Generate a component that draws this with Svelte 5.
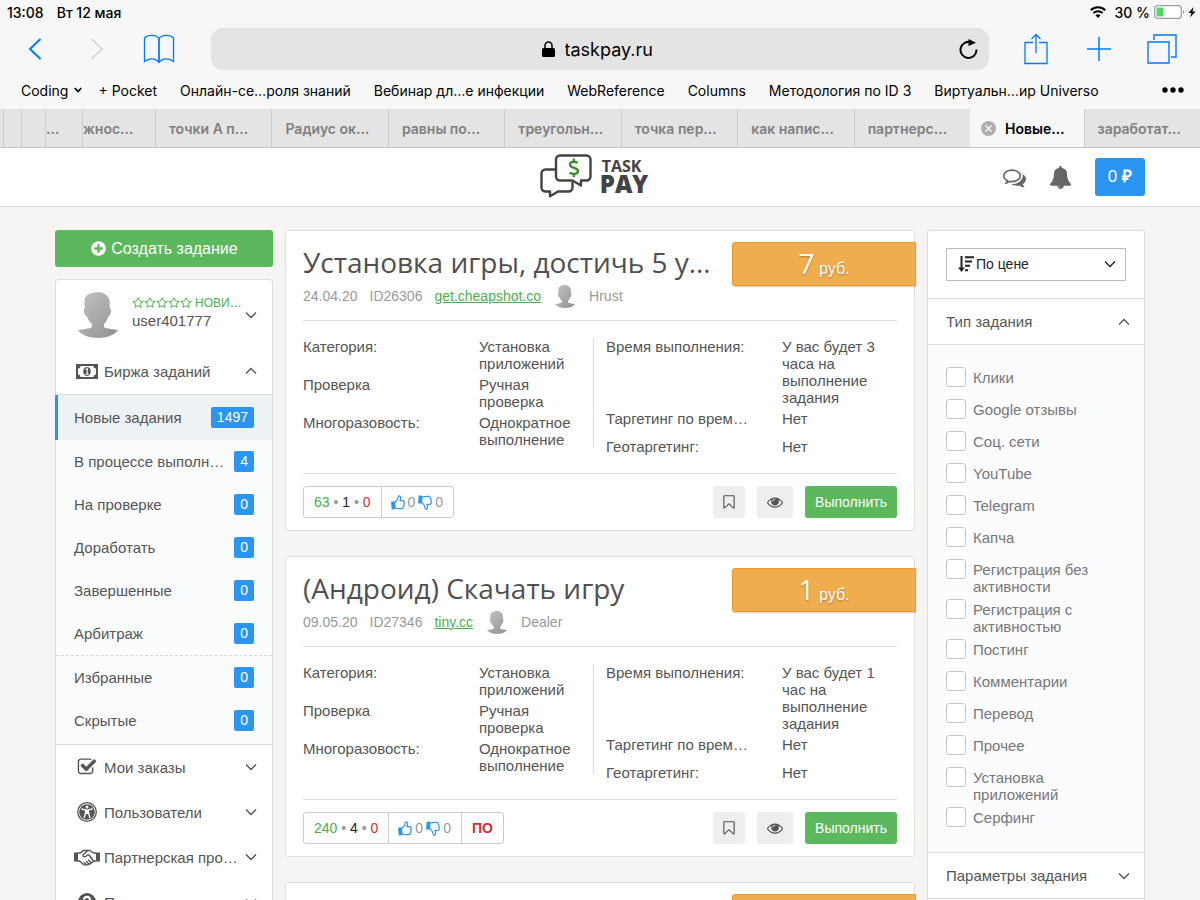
<script>
  const bookmarks = [
    '+ Pocket',
    'Онлайн-се…роля знаний',
    'Вебинар дл…е инфекции',
    'WebReference',
    'Columns',
    'Методология по ID 3',
    'Виртуальн…ир Universo'
  ];

  // tabs squeezed under the left edge, from the outermost inwards
  const stackedTabs = [
    { title: '', width: 3 },
    { title: '', width: 18 },
    { title: '', width: 24 },
    { title: '…', width: 37 },
    { title: 'жнос…', width: 73 }
  ];

  const tabs = [
    'точки А п…',
    'Радиус ок…',
    'равны по…',
    'треугольн…',
    'точка пер…',
    'как напис…',
    'партнерс…',
    'Новые…',
    'заработат…'
  ];
  const activeTab = 'Новые…';

  const exchange = [
    { title: 'Новые задания', count: 1497 },
    { title: 'В процессе выполн…', count: 4 },
    { title: 'На проверке', count: 0 },
    { title: 'Доработать', count: 0 },
    { title: 'Завершенные', count: 0 },
    { title: 'Арбитраж', count: 0 }
  ];

  const saved = [
    { title: 'Избранные', count: 0 },
    { title: 'Скрытые', count: 0 }
  ];

  const sections = [
    { title: 'Мои заказы', icon: 'check' },
    { title: 'Пользователи', icon: 'access' },
    { title: 'Партнерская про…', icon: 'handshake' },
    { title: 'Помощь', icon: 'help' }
  ];

  const tasks = [
    {
      title: 'Установка игры, достичь 5 у…',
      price: 7,
      date: '24.04.20',
      id: 'ID26306',
      site: 'get.cheapshot.co',
      author: 'Hrust',
      time: 'У вас будет 3 часа на выполнение задания',
      done: 63,
      wait: 1,
      fail: 0,
      soft: false
    },
    {
      title: '(Андроид) Скачать игру',
      price: 1,
      date: '09.05.20',
      id: 'ID27346',
      site: 'tiny.cc',
      author: 'Dealer',
      time: 'У вас будет 1 час на выполнение задания',
      done: 240,
      wait: 4,
      fail: 0,
      soft: true
    }
  ];

  const types = [
    'Клики',
    'Google отзывы',
    'Соц. сети',
    'YouTube',
    'Telegram',
    'Капча',
    'Регистрация без активности',
    'Регистрация с активностью',
    'Постинг',
    'Комментарии',
    'Перевод',
    'Прочее',
    'Установка приложений',
    'Серфинг'
  ];

  const paths = {
    check:
      'M1472 930v318q0 119-84.5 203.5t-203.5 84.5h-832q-119 0-203.5-84.5t-84.5-203.5v-832q0-119 84.5-203.5t203.5-84.5h832q63 0 117 25 15 7 18 23 3 17-9 29l-49 49q-10 10-23 10-3 0-9-2-23-6-45-6h-832q-66 0-113 47t-47 113v832q0 66 47 113t113 47h832q66 0 113-47t47-113v-254q0-13 9-22l64-64q10-10 23-10 6 0 12 3 20 8 20 29zm231-489l-814 814q-24 24-57 24t-57-24l-430-430q-24-24-24-57t24-57l110-110q24-24 57-24t57 24l263 263 647-647q24-24 57-24t57 24l110 110q24 24 24 57t-24 57z',
    bell:
      'M912 1696q0-16-16-16-59 0-101.5-42.5t-42.5-101.5q0-16-16-16t-16 16q0 73 51.5 124.5t124.5 51.5q16 0 16-16zm816-288q0 52-38 90t-90 38h-448q0 106-75 181t-181 75-181-75-75-181h-448q-52 0-90-38t-38-90q50-42 91-88t85-119.5 74.5-158.5 50-206 19.5-260q0-152 117-282.5t307-158.5q-8-19-8-39 0-40 28-68t68-28 68 28 28 68q0 20-8 39 190 28 307 158.5t117 282.5q0 139 19.5 260t50 206 74.5 158.5 85 119.5 91 88z',
    comments:
      'M704 384q-153 0-286 52t-211.5 141-78.5 191q0 82 53 158t149 132l97 56-35 84q34-20 62-39l44-31 53 10q78 14 153 14 153 0 286-52t211.5-141 78.5-191-78.5-191-211.5-141-286-52zm0-128q191 0 353.5 68.5t256.5 186.5 94 257-94 257-256.5 186.5-353.5 68.5q-86 0-176-16-124 88-278 128-36 9-86 16h-3q-11 0-20.5-8t-11.5-21q-1-3-1-6.5t.5-6.5 2-6l2.5-5 3.5-5.5 4-5 4.5-5 4-4.5q5-6 23-25t26-29.5 22.5-29 25-38.5 20.5-44q-124-72-195-177t-71-224q0-139 94-257t256.5-186.5 353.5-68.5zm822 1169q10 24 20.5 44t25 38.5 22.5 29 26 29.5 23 25q1 1 4 4.5t4.5 5 4 5 3.5 5.5l2.5 5 2 6 .5 6.5-1 6.5q-3 14-13 22t-22 7q-50-7-86-16-154-40-278-128-90 16-176 16-271 0-472-132 58 4 88 4 161 0 309-45t264-129q125-92 192-212t67-254q0-77-23-152 129 71 204 178t75 230q0 120-71 224.5t-195 176.5z',
    plus:
      'M1344 960v-128q0-26-19-45t-45-19h-256v-256q0-26-19-45t-45-19h-128q-26 0-45 19t-19 45v256h-256q-26 0-45 19t-19 45v128q0 26 19 45t45 19h256v256q0 26 19 45t45 19h128q26 0 45-19t19-45v-256h256q26 0 45-19t19-45zm320-64q0 209-103 385.5t-279.5 279.5-385.5 103-385.5-103-279.5-279.5-103-385.5 103-385.5 279.5-279.5 385.5-103 385.5 103 279.5 279.5 103 385.5z',
    star:
      'M1201 1004l306-297-422-62-189-382-189 382-422 62 306 297-73 421 378-199 377 199zm527-357q0 22-26 48l-363 354 86 500q1 7 1 20 0 50-41 50-19 0-40-12l-449-236-449 236q-22 12-40 12-21 0-31.5-14.5t-10.5-35.5q0-6 2-20l86-500-364-354q-25-27-25-48 0-37 56-46l502-73 225-455q19-41 49-41t49 41l225 455 502 73q56 9 56 46z',
    bookmark:
      'M1408 256h-1024v1242l423-406 89-85 89 85 423 406v-1242zm12-128q23 0 44 9 33 13 52.5 41t19.5 62v1289q0 34-19.5 62t-52.5 41q-19 8-44 8-48 0-83-32l-441-424-441 424q-36 33-83 33-23 0-44-9-33-13-52.5-41t-19.5-62v-1289q0-34 19.5-62t52.5-41q21-9 44-9h1048z',
    eye:
      'M1664 960q-152-236-381-353 61 104 61 225 0 185-131.5 316.5t-316.5 131.5-316.5-131.5-131.5-316.5q0-121 61-225-229 117-381 353 133 205 333.5 326.5t434.5 121.5 434.5-121.5 333.5-326.5zm-720-384q0-20-14-34t-34-14q-125 0-214.5 89.5t-89.5 214.5q0 20 14 34t34 14 34-14 14-34q0-86 61-147t147-61q20 0 34-14t14-34zm848 384q0 34-20 69-140 230-376.5 368.5t-499.5 138.5-499.5-139-376.5-368q-20-35-20-69t20-69q140-229 376.5-368t499.5-139 499.5 139 376.5 368q20 35 20 69z'
  };
</script>

{#snippet glyph(name, size)}
  <svg width={size} height={size} viewBox="0 0 1792 1792" fill="currentColor" aria-hidden="true">
    <path d={paths[name]} />
  </svg>
{/snippet}

{#snippet chevron(up)}
  <svg class="chevron" width="12" height="8" viewBox="0 0 12 8" fill="none" stroke="currentColor" stroke-width="1.4" aria-hidden="true">
    <path d={up ? 'M1 6.5 6 1.5l5 5' : 'M1 1.5l5 5 5-5'} />
  </svg>
{/snippet}

{#snippet avatar(width, height)}
  <svg class="avatar" {width} {height} viewBox="0 0 40 46" aria-hidden="true">
    <defs>
      <linearGradient id="shade" x1="0" y1="0" x2="1" y2="1">
        <stop offset="0" stop-color="#c4c4c4" />
        <stop offset="1" stop-color="#8f9092" />
      </linearGradient>
    </defs>
    <path
      fill="url(#shade)"
      d="M7 7C7 4 10 2 14 1c4-1.400 10-1 12 .5 1 1 2.500 1.500 3.500 3C32 7 32 11 31.500 16c1.800.5 1.700 3 1 5-.6 2-1 3.500-2.300 3.500-.7 3.500-2.200 5.500-4.200 7.500v3c2 2 11 2 14 3.500C36 43 29 46 20 46S4 43 0 38.500C3 37 12 37 14 35v-3c-2.500-2-4-4.500-5-7.500-1.500 0-2.300-2-2.800-4C5.600 18 5.500 16.500 7 16 6.300 13 6 10 7 7z"
    />
  </svg>
{/snippet}

{#snippet thumb(down)}
  <svg class="thumb" width="14" height="15" viewBox="0 0 15 16" fill="none" stroke="currentColor" stroke-width="1.300" stroke-linejoin="round" aria-hidden="true">
    <g transform={down ? 'matrix(1 0 0 -1 0 16)' : undefined}>
      <path d="M.8 7.500h3l.5 7-3 .3z" fill="currentColor" />
      <path d="M4 7.700c1.600-.8 2.800-2.300 3.300-4.200.2-1.300.3-2.500 1.200-2.700 1.500 0 1.900 1.500 1.700 2.800-.1 1-.5 1.800-.6 2.500h3.100c1.400 0 1.800 1.400 1.100 2.100.6.700.6 1.700-.1 2.300.4.800.1 1.600-.5 2 .1 1.400-.7 2-2 2.100-2.800.2-4.200-.1-6.700-.7" />
    </g>
  </svg>
{/snippet}

{#snippet menuIcon(name)}
  <span class="menu-icon">
    {#if name === 'check'}
      {@render glyph('check', 20)}
    {:else if name === 'money'}
      <svg width="22" height="15" viewBox="0 0 22 15" aria-hidden="true">
        <path fill="currentColor" fill-rule="evenodd" d="M0 0h22v15H0zM4.500 2A2.500 2.500 0 0 1 2 4.500v6A2.500 2.500 0 0 1 4.500 13h13a2.500 2.500 0 0 1 2.500-2.500v-6A2.500 2.500 0 0 1 17.500 2z" />
        <ellipse cx="11" cy="7.500" rx="3.800" ry="4.500" fill="currentColor" />
        <path d="M9.800 5.500 11.200 4.500V10M9.500 10.200h3.300" fill="none" stroke="#fff" stroke-width="1.100" />
      </svg>
    {:else if name === 'access'}
      <svg width="20" height="20" viewBox="0 0 20 20" aria-hidden="true">
        <circle cx="10" cy="10" r="9.300" fill="none" stroke="currentColor" stroke-width="1.300" />
        <circle cx="10" cy="10" r="7.800" fill="currentColor" />
        <circle cx="10" cy="5" r="1.500" fill="#fff" />
        <path d="M4.800 7l3.700.9v3L7.200 15.500M15.200 7l-3.700.9v3l1.300 4.600" fill="none" stroke="#fff" stroke-width="1.300" stroke-linecap="round" />
        <path d="M8.200 7.500h3.600v4.500H8.200z" fill="#fff" />
      </svg>
    {:else if name === 'handshake'}
      <svg width="26" height="17" viewBox="0 0 26 17" fill="none" stroke="currentColor" stroke-width="1.400" stroke-linejoin="round" stroke-linecap="round" aria-hidden="true">
        <path d="M0 3.500h4v9H0zM22 3.500h4v9h-4z" fill="currentColor" stroke="none" />
        <path d="M4 4h2.500L9 1.500h4L16 1.500l3.500 2.500H22M4 12h1.500l4 3.500c1 .8 2 .8 2.800 0 1 .7 2.200.3 2.700-.6 1.200.3 2-.2 2.300-1.200 1.200 0 1.700-.6 1.800-1.700H22" />
        <path d="M13.500 1.800 9 6c-.5 1.500 1.500 2.500 3 1.200L13.500 6h1.500l4 5.500M12 15.300l-1.700-1.500M14.800 14.700l-2.300-2.200M17 13.500l-2.500-2.500" />
      </svg>
    {:else}
      <svg width="20" height="20" viewBox="0 0 20 20" aria-hidden="true">
        <circle cx="10" cy="10" r="9" fill="currentColor" />
        <path d="M7 7.500C7.200 4 13 4 13 7.500c0 2-3 2-3 4.500M10 14v2" fill="none" stroke="#fff" stroke-width="2.200" />
      </svg>
    {/if}
  </span>
{/snippet}

{#snippet counter(item, active)}
  <li>
    <a href="#tasks" class="sub" class:active>
      <span>{item.title}</span>
      <span class="badge">{item.count}</span>
    </a>
  </li>
{/snippet}

<div class="screen">
  <div class="chrome">
    <div class="status">
      <span>13:08</span>
      <span class="date">Вт 12 мая</span>
      <svg width="16" height="12" viewBox="0 0 16 12" fill="none" stroke="#000" stroke-width="2" aria-label="Wi-Fi">
        <path d="M.8 4.300a10.300 10.300 0 0 1 14.400 0M3.400 7a6.600 6.600 0 0 1 9.200 0" />
        <path d="M8 12 5.500 9.300a3.700 3.700 0 0 1 5 0z" fill="#000" stroke="none" />
      </svg>
      <span class="percent">30 %</span>
      <svg width="42" height="14" viewBox="0 0 42 14" aria-hidden="true">
        <rect x=".7" y=".7" width="26.600" height="12.600" rx="3" fill="#fff" stroke="#a0a0a0" stroke-width="1.300" />
        <rect x="2.500" y="2.500" width="7" height="9" rx="1" fill="#4cd964" />
        <path d="M29 5c1.500.8 1.500 3.200 0 4z" fill="#a0a0a0" />
        <path d="M39.500 2l-5 6h3l-1.500 4.500 5.500-6h-3z" fill="#000" />
      </svg>
    </div>

    <div class="toolbar">
      <div class="tools left">
        <button aria-label="Назад">
          <svg width="14" height="22" viewBox="0 0 14 22" fill="none" stroke="#007aff" stroke-width="2"><path d="M12.500 1 2 11l10.500 10" /></svg>
        </button>
        <button aria-label="Вперёд" disabled>
          <svg width="14" height="22" viewBox="0 0 14 22" fill="none" stroke="#d6d6d6" stroke-width="1.600"><path d="M1.500 1 12 11 1.500 21" /></svg>
        </button>
        <button aria-label="Закладки">
          <svg width="32" height="30" viewBox="0 0 32 30" fill="none" stroke="#007aff" stroke-width="1.300">
            <path d="M16 4.500C13 .5 5 .5 1.500 4v23.500c4-3.500 11-4 14.500 1 3.500-5 10.500-4.500 14.500-1V4C27 .5 19 .5 16 4.500zv24" />
            <path d="M16 4.500v24" />
          </svg>
        </button>
      </div>

      <div class="address">
        <svg width="13" height="16" viewBox="0 0 13 16" aria-hidden="true">
          <rect x="0" y="7" width="13" height="9" rx="1.500" />
          <path d="M3 7.500V4.500a3.500 3.500 0 0 1 7 0v3" fill="none" stroke="#000" stroke-width="1.500" />
        </svg>
        <input type="text" value="taskpay.ru" aria-label="Адрес" />
        <button class="reload" aria-label="Обновить">
          <svg width="20" height="22" viewBox="0 0 20 22" fill="none" stroke="#000" stroke-width="2">
            <path d="M17.500 11.500A8 8 0 1 1 12 4.300" />
            <path d="M9.500 1 17 4.700 9.500 8z" fill="#000" stroke="none" />
          </svg>
        </button>
      </div>

      <div class="tools right">
        <button aria-label="Поделиться">
          <svg width="24" height="32" viewBox="0 0 24 32" fill="none" stroke="#007aff" stroke-width="1.300">
            <path d="M9 9.500H1v21h22v-21h-8M12 20V1.500M7.500 6 12 1.500 16.500 6" />
          </svg>
        </button>
        <button aria-label="Новая вкладка">
          <svg width="26" height="32" viewBox="0 0 26 32" fill="none" stroke="#007aff" stroke-width="1.500"><path d="M1 16h24M13 4v24" /></svg>
        </button>
        <button aria-label="Все вкладки">
          <svg width="30" height="30" viewBox="0 0 30 30" fill="none" stroke="#007aff" stroke-width="1.400">
            <path d="M1 8h21v21H1zM7 6V1h22v22h-5" />
          </svg>
        </button>
      </div>
    </div>

    <nav class="bookmarks">
      <a href="#coding" class="folder">
        Coding
        <svg width="8" height="6" viewBox="0 0 8 6" fill="none" stroke="#000" stroke-width="1.600" aria-hidden="true"><path d="M.7 1 4 4.500 7.300 1" /></svg>
      </a>
      {#each bookmarks as title}
        <a href="#bookmark">{title}</a>
      {/each}
      <button aria-label="Ещё">
        <svg width="22" height="6" viewBox="0 0 22 6"><circle cx="3" cy="3" r="2.700" /><circle cx="11" cy="3" r="2.700" /><circle cx="19" cy="3" r="2.700" /></svg>
      </button>
    </nav>

    <div class="tabs">
      {#each stackedTabs as tab}
        <a href="#tab" class="tab stacked" style="width: {tab.width}px" aria-label="Вкладка">{tab.title}</a>
      {/each}
      {#each tabs as title}
        <a href="#tab" class="tab" class:current={title === activeTab}>
          {#if title === activeTab}
            <svg width="15" height="15" viewBox="0 0 15 15" aria-hidden="true">
              <circle cx="7.500" cy="7.500" r="7.500" fill="#aeaeae" />
              <path d="M4.500 4.500l6 6M10.500 4.500l-6 6" stroke="#fff" stroke-width="1.300" />
            </svg>
          {/if}
          {title}
        </a>
      {/each}
    </div>
  </div>

  <header class="site-header">
    <div class="container header-row">
      <a href="#home" class="logo">
        <svg width="52" height="44" viewBox="0 0 52 44" fill="none" stroke="#434343" stroke-width="2.400" stroke-linejoin="round" aria-hidden="true">
          <path d="M15.500 15.500H5.500a4 4 0 0 0-4 4v14a4 4 0 0 0 4 4h4.500v4.800l8-4.800h10.500a4 4 0 0 0 4-4V28" />
          <path fill="#fff" d="M20 1.500h26.500a4 4 0 0 1 4 4v17a4 4 0 0 1-4 4H41v5L32.500 26.500H20a4 4 0 0 1-4-4V5.500a4 4 0 0 1 4-4z" />
          <path stroke="#3c9126" d="M37.500 9c-3-2-7.500-1.500-7.500 1.700 0 4 8 2.500 8 6.300 0 3.300-5 3.700-8.500 1.700M33.800 4.500v3M33.800 19.500V23" />
        </svg>
        <span class="brand">
          <span class="task">TASK</span>
          <span class="pay">PAY</span>
        </span>
      </a>
      <div class="header-tools">
        <button aria-label="Сообщения">{@render glyph('comments', 23)}</button>
        <button aria-label="Уведомления">{@render glyph('bell', 23)}</button>
        <a href="#balance" class="balance">0 <b>₽</b></a>
      </div>
    </div>
  </header>

  <main>
    <div class="container columns">
      <aside>
        <button class="create">{@render glyph('plus', 17)} Создать задание</button>

        <div class="panel">
          <button class="user">
            {@render avatar(40, 46)}
            <span class="who">
              <span class="rank">
                {#each [1, 2, 3, 4, 5] as n (n)}{@render glyph('star', 12)}{/each}
                <span>НОВИ…</span>
              </span>
              <span class="name">user401777</span>
            </span>
            {@render chevron(false)}
          </button>

          <button class="section">
            {@render menuIcon('money')}
            Биржа заданий
            {@render chevron(true)}
          </button>
          <div class="submenu">
            <ul>
              {#each exchange as item, i}
                {@render counter(item, i === 0)}
              {/each}
            </ul>
            <ul class="saved">
              {#each saved as item}
                {@render counter(item, false)}
              {/each}
            </ul>
          </div>

          {#each sections as section}
            <button class="section">
              {@render menuIcon(section.icon)}
              {section.title}
              {@render chevron(false)}
            </button>
          {/each}
        </div>
      </aside>

      <section class="feed">
        {#each tasks as task}
          <article class="card">
            <div class="ribbon"><span class="sum">{task.price}</span> руб.</div>
            <h2>{task.title}</h2>
            <div class="meta">
              <span>{task.date}</span>
              <span>{task.id}</span>
              <a href="#site">{task.site}</a>
              {@render avatar(20, 23)}
              <span>{task.author}</span>
            </div>
            <div class="details">
              <dl class="first">
                <div><dt>Категория:</dt><dd>Установка приложений</dd></div>
                <div><dt>Проверка</dt><dd>Ручная проверка</dd></div>
                <div><dt>Многоразовость:</dt><dd>Однократное выполнение</dd></div>
              </dl>
              <dl>
                <div><dt>Время выполнения:</dt><dd>{task.time}</dd></div>
                <div><dt>Таргетинг по врем…</dt><dd>Нет</dd></div>
                <div><dt>Геотаргетинг:</dt><dd>Нет</dd></div>
              </dl>
            </div>
            <footer>
              <div class="stats">
                <span>
                  <span class="done">{task.done}</span> • <span class="wait">{task.wait}</span> • <span class="fail">{task.fail}</span>
                </span>
                <span class="votes">{@render thumb(false)} 0 {@render thumb(true)} 0</span>
                {#if task.soft}
                  <span class="soft">ПО</span>
                {/if}
              </div>
              <button class="tool" aria-label="В избранное">{@render glyph('bookmark', 16)}</button>
              <button class="tool" aria-label="Скрыть">{@render glyph('eye', 16)}</button>
              <button class="run">Выполнить</button>
            </footer>
          </article>
        {/each}
        <article class="card next"><div class="ribbon"></div></article>
      </section>

      <aside class="panel">
        <div class="sort">
          <svg width="16" height="16" viewBox="0 0 16 16" fill="none" stroke="#222" aria-hidden="true">
            <path d="M3.500 0v12" stroke-width="2" />
            <path d="M0 11.500h7L3.500 16z" fill="#222" stroke="none" />
            <path d="M7 1.200h9M7 5.500h7M7 9.800h5M7 14.200h3" stroke-width="2" />
          </svg>
          <select aria-label="Сортировка">
            <option>По цене</option>
          </select>
          {@render chevron(false)}
        </div>
        <button class="filter">Тип задания {@render chevron(true)}</button>
        <ul class="types">
          {#each types as type}
            <li><label><input type="checkbox" /> <span>{type}</span></label></li>
          {/each}
        </ul>
        <button class="filter">Параметры задания {@render chevron(false)}</button>
        <button class="filter" aria-label="Ещё фильтры"></button>
      </aside>
    </div>
  </main>
</div>

<style>
  :global(body) {
    margin: 0;
    background: #f6f5f3;
  }
  .screen {
    height: 100vh;
    overflow: hidden;
    font: 15px/17px "Liberation Sans", Arial, sans-serif;
    color: #555;
  }
  .screen :global(*) {
    box-sizing: border-box;
  }
  button,
  input,
  select {
    margin: 0;
    padding: 0;
    border: 0;
    background: none;
    font: inherit;
    color: inherit;
  }
  ul,
  dl,
  dd,
  h2 {
    margin: 0;
    padding: 0;
    list-style: none;
  }
  a {
    color: inherit;
    text-decoration: none;
  }
  svg {
    display: block;
    flex: none;
  }

  /* browser */
  .chrome {
    background: #f7f7f7;
    font-family: Inter, "Noto Sans", sans-serif;
    font-size: 14px;
    color: #000;
  }
  .status {
    display: flex;
    align-items: center;
    height: 24px;
    padding: 0 4px 0 7px;
    font-weight: 500;
  }
  .date {
    margin: 0 auto 0 13px;
  }
  .percent {
    margin: 0 4px 0 9px;
  }
  .toolbar {
    display: flex;
    align-items: center;
    height: 50px;
  }
  .tools {
    display: flex;
    flex: none;
    width: 211px;
  }
  .left {
    padding-left: 4px;
  }
  .right {
    padding-left: 15px;
  }
  .tools button {
    display: flex;
    justify-content: center;
    align-items: center;
    width: 62px;
  }
  .right button {
    width: 63px;
  }
  .address {
    position: relative;
    display: flex;
    flex: 1;
    justify-content: center;
    align-items: center;
    gap: 10px;
    height: 42px;
    border-radius: 12px;
    background: #e4e4e4;
  }
  .address input {
    width: 94px;
    font-size: 18px;
  }
  .reload {
    position: absolute;
    right: 10px;
  }
  .bookmarks {
    display: flex;
    align-items: center;
    gap: 23px;
    height: 35px;
    padding: 0 16px 3px 21px;
    white-space: nowrap;
  }
  .folder {
    display: flex;
    align-items: center;
    gap: 6px;
    margin-right: -7px;
  }
  .bookmarks button {
    margin-left: auto;
  }
  .tabs {
    display: flex;
    height: 39px;
    border-bottom: 1px solid #c6c6c6;
    background: #e4e4e4;
  }
  .tab {
    display: flex;
    flex: 1;
    align-items: center;
    gap: 9px;
    padding-left: 13px;
    border-left: 1px solid #cdcdcd;
    overflow: hidden;
    font-weight: 600;
    color: #808080;
    white-space: nowrap;
  }
  .stacked {
    flex: none;
    padding: 0;
  }
  .stacked:first-child {
    border-left: 0;
  }
  .current {
    padding-left: 10px;
    border-color: #f7f7f7;
    background: #f7f7f7;
    color: #000;
  }

  /* site header */
  .container {
    max-width: 1090px;
    margin: 0 auto;
  }
  .site-header {
    border-bottom: 1px solid #ddd;
    background: #fff;
  }
  .header-row {
    display: grid;
    grid-template-columns: 1fr auto 1fr;
    align-items: center;
    height: 58px;
  }
  .logo {
    display: flex;
    grid-column: 2;
    align-items: center;
    gap: 8px;
    padding: 0 12px 2px 0;
    font-family: "Open Sans", sans-serif;
    color: #434343;
  }
  .brand {
    display: flex;
    flex-direction: column;
  }
  .task {
    padding-left: 2px;
    font-weight: 700;
    font-size: 16px;
    line-height: 16px;
  }
  .pay {
    font-weight: 800;
    font-size: 24px;
    line-height: 20px;
  }
  .header-tools {
    display: flex;
    justify-content: flex-end;
    align-items: center;
    gap: 23px;
    color: #666;
  }
  .balance {
    padding: 10px 13px;
    border-radius: 3px;
    background: #2b96f1;
    font-size: 17px;
    line-height: 18px;
    color: #fff;
  }

  /* page */
  .columns {
    display: grid;
    grid-template-columns: 218px 1fr 218px;
    gap: 12px;
    align-items: start;
    padding-top: 23px;
  }
  .panel {
    border: 1px solid #ddd;
    border-radius: 3px;
    background: #fff;
  }
  .create {
    display: flex;
    justify-content: center;
    align-items: center;
    gap: 4px;
    width: 100%;
    height: 37px;
    margin-bottom: 12px;
    border-radius: 3px;
    background: #5cb85c;
    font-size: 16px;
    color: #fff;
  }
  .user {
    display: flex;
    align-items: center;
    gap: 14px;
    width: 100%;
    height: 69px;
    padding: 0 15px 0 22px;
    text-align: left;
  }
  .who {
    display: flex;
    flex: 1;
    flex-direction: column;
    min-width: 0;
    padding-bottom: 6px;
    white-space: nowrap;
  }
  .rank {
    display: flex;
    align-items: center;
    font-size: 12px;
    color: #4caf50;
  }
  .rank span {
    margin-left: 3px;
  }
  .user .chevron {
    margin-left: -10px;
  }
  .section {
    display: flex;
    align-items: center;
    gap: 4px;
    width: 100%;
    height: 45px;
    padding: 0 15px 1px 18px;
    white-space: nowrap;
  }
  .section .chevron,
  .filter .chevron {
    margin-left: auto;
  }
  .menu-icon {
    display: flex;
    justify-content: center;
    width: 26px;
  }
  .submenu {
    padding-bottom: 2px;
    border: solid #dcdfe1;
    border-width: 1px 0;
    background: #fbfcfe;
  }
  .saved {
    border-top: 1px dashed #d5d8da;
  }
  .sub {
    display: flex;
    justify-content: space-between;
    align-items: center;
    height: 43px;
    padding: 0 18px;
    white-space: nowrap;
  }
  .active {
    height: 45px;
    margin-left: -1px;
    padding-left: 16px;
    border-left: 3px solid #2b96f1;
    background: #edf2f5;
  }
  .badge {
    padding: 0 6px;
    border-radius: 2px;
    background: #2b96f1;
    font-size: 14px;
    line-height: 21px;
    color: #fff;
  }

  /* task cards */
  .card {
    position: relative;
    margin-bottom: 25px;
    padding: 14px 17px 12px;
    border: 1px solid #ddd;
    border-radius: 3px;
    background: #fff;
  }
  .next {
    height: 300px;
  }
  .ribbon {
    position: absolute;
    top: 11px;
    right: -2px;
    width: 184px;
    height: 44px;
    border: 1px solid #ee9a24;
    border-radius: 3px 0 0 3px;
    background: #f0ad4e;
    box-shadow: 0 1px 2px rgba(0, 0, 0, 0.2);
    font-size: 16px;
    line-height: 41px;
    text-align: center;
    text-shadow: 0 1px 2px rgba(0, 0, 0, 0.3);
    color: #fff;
  }
  .sum {
    font-family: "Open Sans", sans-serif;
    font-size: 28px;
  }
  h2 {
    padding-right: 185px;
    font: 400 28px/34px "Open Sans", sans-serif;
    color: #505050;
    white-space: nowrap;
  }
  .meta {
    display: flex;
    align-items: center;
    gap: 12px;
    height: 42px;
    padding-bottom: 7px;
    border-bottom: 1px solid #ddd;
    font-size: 14px;
    color: #999;
  }
  .meta a {
    color: #4caf50;
    text-decoration: underline;
  }
  .meta .avatar {
    margin: 0 2px;
  }
  .details {
    display: grid;
    grid-template-columns: 1fr 1fr;
    gap: 12px;
    align-items: start;
    padding: 17px 0 7px;
  }
  .first {
    border-right: 1px solid #ddd;
  }
  dl div {
    display: grid;
    grid-template-columns: 176px 1fr;
    min-height: 28px;
    padding-bottom: 4px;
  }
  .first div:last-child {
    padding-bottom: 0;
  }
  dt {
    white-space: nowrap;
  }
  footer {
    display: flex;
    gap: 12px;
    padding-top: 12px;
    border-top: 1px solid #ddd;
  }
  .stats {
    display: flex;
    margin-right: auto;
    border: 1px solid #ccc;
    border-radius: 3px;
    font-size: 14px;
    line-height: 30px;
    color: #999;
  }
  .stats > span {
    padding: 0 10px;
  }
  .stats > span + span {
    border-left: 1px solid #ccc;
  }
  .stats .votes {
    display: flex;
    align-items: center;
    gap: 3px;
    padding-left: 9px;
  }
  .done {
    color: #4caf50;
  }
  .wait {
    color: #222;
  }
  .fail,
  .soft {
    color: #d32f2f;
  }
  .soft {
    font-weight: 700;
  }
  .thumb {
    color: #2b96f1;
  }
  .tool,
  .run {
    height: 32px;
    padding: 0 10px;
    border-radius: 3px;
    background: #eee;
  }
  .tool {
    padding: 0 8px;
  }
  .tool + .tool {
    padding: 0 10px;
  }
  .run {
    background: #5cb85c;
    font-size: 14px;
    color: #fff;
  }

  /* filters */
  .sort {
    position: relative;
    padding: 17px 18px;
    color: #222;
  }
  .sort select {
    appearance: none;
    width: 100%;
    height: 33px;
    padding-left: 29px;
    border: 1px solid #bbb;
    border-radius: 0;
    background: #fff;
    font-size: 14px;
  }
  .sort svg {
    position: absolute;
    top: 25px;
    left: 30px;
  }
  .sort .chevron {
    top: 29px;
    right: 28px;
    left: auto;
  }
  .filter {
    display: flex;
    align-items: center;
    width: 100%;
    height: 46px;
    padding: 0 14px 0 18px;
    border-top: 1px solid #ddd;
    white-space: nowrap;
  }
  .types {
    padding: 22px 18px 13px;
    border-top: 1px solid #ddd;
    background: #fbfcfe;
    color: #777;
  }
  .types li {
    min-height: 32px;
    padding-bottom: 4px;
  }
  .types label {
    display: flex;
    gap: 7px;
  }
  .types span {
    padding-top: 2px;
  }
  .types input {
    appearance: none;
    flex: none;
    width: 20px;
    height: 20px;
    border: 1px solid #c4c6c8;
    border-radius: 3px;
    background: #fff;
  }
</style>
